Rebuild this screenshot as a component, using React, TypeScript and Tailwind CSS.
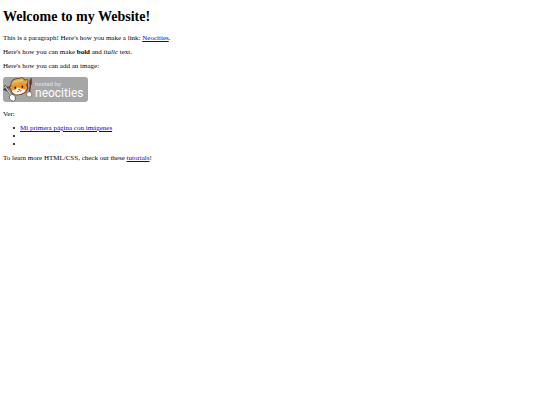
import React from 'react';

const links = [
  { id: 1, label: 'Mi primera página con imágenes' },
  { id: 2, label: '' },
  { id: 3, label: '' },
];

const linkClass = 'text-[#0000ee] underline';

const NeocitiesBadge: React.FC = () => (
  <svg width="85" height="25" viewBox="0 0 85 25" role="img" aria-label="hosted by neocities" className="block">
    <rect width="85" height="25" rx="3" fill="#a6a6a6" />
    {/* Pencil */}
    <path d="M1.8 8.5 L8.6 19 M.8 12 L4.2 13.4 L4.8 9.6" fill="none" stroke="#444" strokeWidth="2" />
    <path d="M2.2 9.2 L8.4 18.6" stroke="#ddd" strokeWidth="1.1" />
    {/* Cat head */}
    <path d="M7 12.5 L5 10 L7.2 8.6 L8 4.4 L11 1.8 L19.5 .3 L22 2.4 L25.4 2.2 L24.8 7 L25.4 11.5 L23 15.6 L18.5 17.8 L13 18.4 L9 16.5 Z" fill="#6b4220" />
    <path d="M6.8 10 L10 7.7 L22.3 5.5 L24.4 11 L22.4 14.8 L17.8 17 L13 17.4 L9.4 15.6 Z" fill="#f0902f" />
    <path d="M9 13.5 L12 13 L15 10.4 L18.4 12 L22.8 12.4 L21.6 15 L17.8 17 L13 17.5 L10 16 Z" fill="#fff" />
    <path d="M8 8.7 L8.8 4.8 L12 2.4 L19.4 1 L21.6 3.6 L24.7 3 L23.9 7 L20 6 L13.6 7.4 Z" fill="#e5ab3d" />
    <path d="M10.4 5 L19.6 3.2" stroke="#f8d070" strokeWidth="1" />
    <ellipse cx="12.2" cy="10.8" rx=".8" ry="1.2" fill="#33190b" />
    <ellipse cx="19.4" cy="9.8" rx=".8" ry="1.2" fill="#33190b" />
    <path d="M15.2 12.2 h1.8 l-.8 1 Z M14 14.2 q1.3 1.2 2.4 -.4 q1.2 .9 2.3 -.5" fill="#b33b25" stroke="#6b4220" strokeWidth=".4" />
    {/* Brush */}
    <path d="M27.4 7.5 L26.4 16" stroke="#4a3028" strokeWidth="1.3" />
    <path d="M26.6 7.5 Q25.8 4 28.2 1 Q29.3 4.8 28.3 7.6 Z" fill="#8a2820" stroke="#432" strokeWidth=".5" />
    {/* Paws */}
    <circle cx="26.3" cy="17.4" r="2.6" fill="#fff" stroke="#444" strokeWidth=".6" />
    <path d="M6.4 19.2 L8.8 17.2 L10.8 18.2 L12.3 19.9 L12.3 22.8 L10.4 24.3 L8 23.4 L6.4 21.4 Z" fill="#fff" stroke="#444" strokeWidth=".7" />
    <text x="32" y="9" fill="#e4e4e4" fontFamily="Lato, sans-serif" fontSize="6">hosted by</text>
    <text x="32" y="20" fill="#fff" fontFamily="Roboto, sans-serif" fontSize="12">neocities</text>
  </svg>
);

export default function App() {
  return (
    <main className="flex flex-col gap-1.5 px-[3px] py-[9px] font-['Liberation_Serif',serif] text-[7px] leading-2 text-black">
      <h1 className="mb-[3px] text-[14px] leading-4 font-bold">Welcome to my Website!</h1>

      <p>
        This is a paragraph! Here's how you make a link: <a href="#" className={linkClass}>Neocities</a>.
      </p>

      <p>
        Here's how you can make <strong>bold</strong> and <em>italic</em> text.
      </p>

      <p>Here's how you can add an image:</p>

      <div className="pt-px pb-0.5">
        <NeocitiesBadge />
      </div>

      <p>Ver:</p>

      <ul className="pl-2.5">
        {links.map(item => (
          <li key={item.id} className="flex min-h-2 items-center gap-[5px]">
            <span className="size-0.5 rounded-full bg-black" />
            {item.label && <a href="#" className={linkClass}>{item.label}</a>}
          </li>
        ))}
      </ul>

      <p>
        To learn more HTML/CSS, check out these <a href="#" className={linkClass}>tutorials</a>!
      </p>
    </main>
  );
}
